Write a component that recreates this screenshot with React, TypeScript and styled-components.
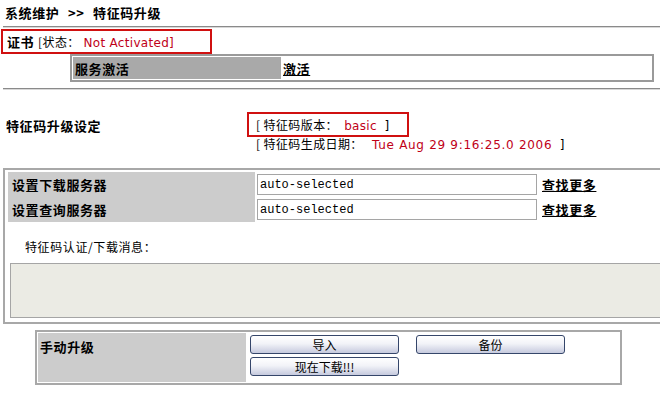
import React from 'react';
import styled, { createGlobalStyle } from 'styled-components';

const GlobalStyle = createGlobalStyle`
  body {
    margin: 0;
    background: #ffffff;
    font-family: 'DejaVu Sans', 'Noto Sans CJK SC', sans-serif;
    font-size: 12px;
    color: #000;
  }
`

const Page = styled.div`
  width: 665px;
  height: 393px;
  overflow: hidden;
  display: flex;
  flex-direction: column;
`
const Title = styled.div`
  font-family: 'Noto Sans CJK SC', sans-serif;
  font-weight: bold;
  font-size: 13px;
  letter-spacing: 0.6px;
  word-spacing: 5px;
  line-height: 16px;
  padding: 5px 0 0 5px;
  height: 21px;
  white-space: pre;
`
const Rule = styled.div<{ $top: number }>`
  margin: ${p => p.$top}px 5px 0 3px;
  border-top: 1px solid #8a8a8a;
  border-bottom: 1px solid #d8d8d8;
`
const CertBox = styled.div`
  margin: 1px 0 0 1px;
  width: 203px;
  height: 21px;
  border: 2px solid #d01010;
  display: flex;
  align-items: center;
  padding-left: 4px;
`
const Line = styled.span`
  white-space: pre;
`
const Strong = styled.span`
  font-family: 'Noto Sans CJK SC', sans-serif;
  font-weight: bold;
  font-size: 13px;
  letter-spacing: 0.6px;
`
const Cjk = styled.span`
  font-family: 'Noto Sans CJK SC', sans-serif;
  letter-spacing: 0.4px;
`
const Red = styled.span<{ $wide?: boolean }>`
  color: #c00018;
  letter-spacing: ${p => (p.$wide ? '0.7px' : '0.3px')};
`
const ServiceTable = styled.div`
  margin: 0 0 0 70px;
  width: 578px;
  height: 22px;
  border: 2px solid #9a9a9a;
  display: flex;
  align-items: stretch;
  padding: 1px;
  box-sizing: content-box;
`
const GrayCell = styled.div<{ $bg?: string; $w: number }>`
  width: ${p => p.$w}px;
  background: ${p => p.$bg || '#cccccc'};
  font-family: 'Noto Sans CJK SC', sans-serif;
  font-weight: bold;
  font-size: 13px;
  letter-spacing: 0.6px;
  display: flex;
  flex-direction: column;
  padding-left: 2px;
  box-sizing: border-box;
`
const Link = styled.a`
  font-family: 'Noto Sans CJK SC', sans-serif;
  font-weight: bold;
  font-size: 13px;
  letter-spacing: 0.6px;
  color: #000;
  text-decoration: underline;
  cursor: pointer;
`
const ServiceLink = styled(Link)`
  margin-left: 2px;
  align-self: center;
`
const SettingsRow = styled.div`
  display: flex;
  margin-top: 22px;
  height: 59px;
`
const SettingsLabel = styled.div`
  width: 242px;
  padding: 4px 0 0 6px;
  font-family: 'Noto Sans CJK SC', sans-serif;
  font-weight: bold;
  font-size: 13px;
  letter-spacing: 0.6px;
`
const VersionCol = styled.div`
  display: flex;
  flex-direction: column;
`
const VersionBox = styled.div`
  width: 151px;
  height: 21px;
  border: 2px solid #d01010;
  display: flex;
  align-items: center;
  padding-left: 7px;
  box-sizing: content-box;
  margin-left: -1px;
`
const DateLine = styled.div`
  padding-left: 8px;
  line-height: 14px;
  white-space: pre;
`
const ServerBox = styled.div`
  margin: -3px 5px 0 3px;
  height: 150px;
  border-top: 2px solid #a8a8a8;
  border-left: 2px solid #a8a8a8;
  border-bottom: 2px solid #a8a8a8;
  padding: 2px 0 0 3px;
  display: flex;
  flex-direction: column;
`
const ServerGrid = styled.div`
  display: flex;
  height: 50px;
`
const InputCol = styled.div`
  display: flex;
  flex-direction: column;
  gap: 4px;
  padding: 2px 0 0 2px;
`
const InputRow = styled.div`
  display: flex;
  align-items: center;
  gap: 5px;
`
const TextInput = styled.input`
  width: 280px;
  height: 21px;
  box-sizing: border-box;
  border: 1px solid #a5a5a5;
  font-family: 'Liberation Mono', 'DejaVu Sans Mono', monospace;
  font-size: 12px;
  padding: 0 2px;
  margin: 0;
  outline: none;
`
const ServerLabel = styled.div`
  height: 25px;
  display: flex;
  align-items: center;
  padding-left: 2px;
`
const MsgLabel = styled.div`
  margin: 18px 0 0 17px;
  font-family: 'Noto Sans CJK SC', sans-serif;
  letter-spacing: 0.6px;
  line-height: 14px;
`
const MsgArea = styled.div`
  margin: 9px 0 0 2px;
  height: 55px;
  background: #ebebe4;
  border: 1px solid #a5a5a5;
  border-right: none;
  box-sizing: border-box;
`
const ManualTable = styled.div`
  margin: 6px 0 0 35px;
  width: 587px;
  height: 55px;
  border: 2px solid #a8a8a8;
  box-sizing: border-box;
  padding: 1px;
  display: flex;
`
const ButtonGrid = styled.div`
  display: grid;
  grid-template-columns: 149px 149px;
  column-gap: 17px;
  row-gap: 3px;
  align-content: start;
  padding: 2px 0 0 4px;
`
const Button = styled.button`
  height: 19px;
  width: 149px;
  border: 1px solid #35466a;
  border-radius: 3px;
  background: linear-gradient(#ffffff 0%, #f2f3f8 45%, #c6cade 100%);
  font-family: 'Noto Sans CJK SC', sans-serif;
  font-size: 12px;
  line-height: 15px;
  padding: 0;
  color: #000;
`

export default function App() {
  return (
    <Page>
      <GlobalStyle />
      <Title>系统维护 &gt;&gt; 特征码升级</Title>
      <Rule $top={0} />
      <CertBox>
        <Line>
          <Strong>证书</Strong> <Cjk>[状态：</Cjk> <Red>Not Activated]</Red>
        </Line>
      </CertBox>
      <ServiceTable>
        <GrayCell $w={208} $bg="#a9a9a9" style={{ justifyContent: 'center' }}>服务激活</GrayCell>
        <ServiceLink>激活</ServiceLink>
      </ServiceTable>
      <Rule $top={6} />
      <SettingsRow>
        <SettingsLabel>特征码升级设定</SettingsLabel>
        <VersionCol>
          <VersionBox>
            <Line>
              <Cjk>[ 特征码版本：  </Cjk><Red>basic</Red>  ]
            </Line>
          </VersionBox>
          <DateLine>
            <Cjk>[ 特征码生成日期：   </Cjk><Red $wide>Tue Aug 29 9:16:25.0 2006</Red>  ]
          </DateLine>
        </VersionCol>
      </SettingsRow>
      <ServerBox>
        <ServerGrid>
          <GrayCell $w={247}>
            <ServerLabel>设置下载服务器</ServerLabel>
            <ServerLabel>设置查询服务器</ServerLabel>
          </GrayCell>
          <InputCol>
            <InputRow>
              <TextInput defaultValue="auto-selected" />
              <Link>查找更多</Link>
            </InputRow>
            <InputRow>
              <TextInput defaultValue="auto-selected" />
              <Link>查找更多</Link>
            </InputRow>
          </InputCol>
        </ServerGrid>
        <MsgLabel>特征码认证/下载消息：</MsgLabel>
        <MsgArea />
      </ServerBox>
      <ManualTable>
        <GrayCell $w={208} style={{ paddingTop: 4 }}>手动升级</GrayCell>
        <ButtonGrid>
          <Button>导入</Button>
          <Button>备份</Button>
          <Button>现在下载!!!</Button>
        </ButtonGrid>
      </ManualTable>
    </Page>
  );
}
